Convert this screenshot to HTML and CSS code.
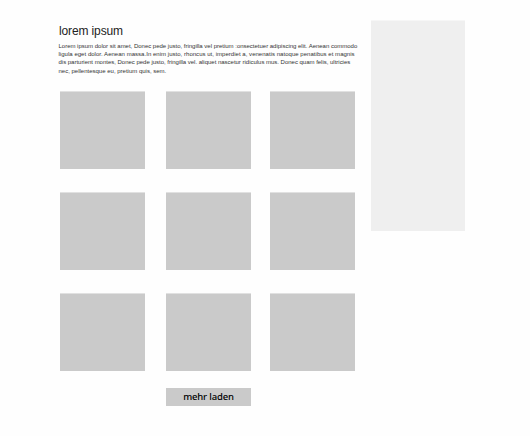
FILE: index.html
```html
<!DOCTYPE html>
<html lang="de">
<head>
<meta charset="utf-8">
<title>lorem ipsum</title>
<link rel="stylesheet" href="styles.css">
</head>
<body>
<div class="page">
  <main class="content">
    <h1 class="title">lorem ipsum</h1>
    <p class="intro">
      <span class="line first">Lorem ipsum dolor sit amet, Donec pede justo, fringilla vel pretium :onsectetuer adipiscing elit. Aenean commodo</span>
      <span class="line second">ligula eget dolor. Aenean massa.In enim justo, rhoncus ut, imperdiet a, venenatis natoque penatibus et magnis</span>
      <span class="line third">dis parturient montes, Donec pede justo, fringilla vel. aliquet nascetur ridiculus mus. Donec quam felis, ultricies</span>
      <span class="line fourth">nec, pellentesque eu, pretium quis, sem.</span>
    </p>
    <div class="grid">
      <div class="tile"></div><div class="tile"></div><div class="tile"></div>
      <div class="tile"></div><div class="tile"></div><div class="tile"></div>
      <div class="tile"></div><div class="tile"></div><div class="tile"></div>
      <button class="more" type="button">mehr laden</button>
    </div>
  </main>
  <aside class="sidebar"></aside>
</div>
</body>
</html>
```
FILE: styles.css
```css
* { box-sizing: border-box; }

body {
  margin: 0;
  background: #fefefe;
  font-family: "Liberation Sans", Arial, sans-serif;
  color: #222;
}

.page {
  display: flex;
  align-items: flex-start;
  gap: 12px;
  padding: 20px 0 0 58px;
}

.content { width: 301px; }

.title {
  margin: 0;
  padding: 3px 0 0 1px;
  height: 21px;
  font-size: 12px;
  letter-spacing: -0.13px;
  font-weight: 400;
  line-height: 16px;
}

.intro {
  margin: 0;
  padding: 1px 0 0 0.5px;
  height: 50px;
  font-size: 6px;
  line-height: 8.2px;
  color: #333;
}

.line {
  display: block;
  white-space: nowrap;
}

.first { letter-spacing: -0.01px; }
.second { letter-spacing: 0.03px; }
.third { letter-spacing: -0.015px; }

.grid {
  display: grid;
  grid-template-columns: 106px 104px 85px;
  grid-template-rows: repeat(3, 78px);
  row-gap: 23px;
  padding-left: 2px;
}

.tile {
  width: 85px;
  height: 78px;
  background: #cacaca;
  border-top: 1px solid #e1e1e1;
}

.more {
  grid-column: 2;
  width: 85px;
  height: 18px;
  margin-top: -6px;
  padding: 0;
  border: 0;
  background: #cacaca;
  color: #000;
  font: 500 9.5px/18px "Noto Sans", sans-serif;
  letter-spacing: -0.15px;
  text-align: center;
}

.sidebar {
  width: 94px;
  height: 211px;
  background: #efefef;
  border-top: 1px solid #f6f6f6;
}
```
